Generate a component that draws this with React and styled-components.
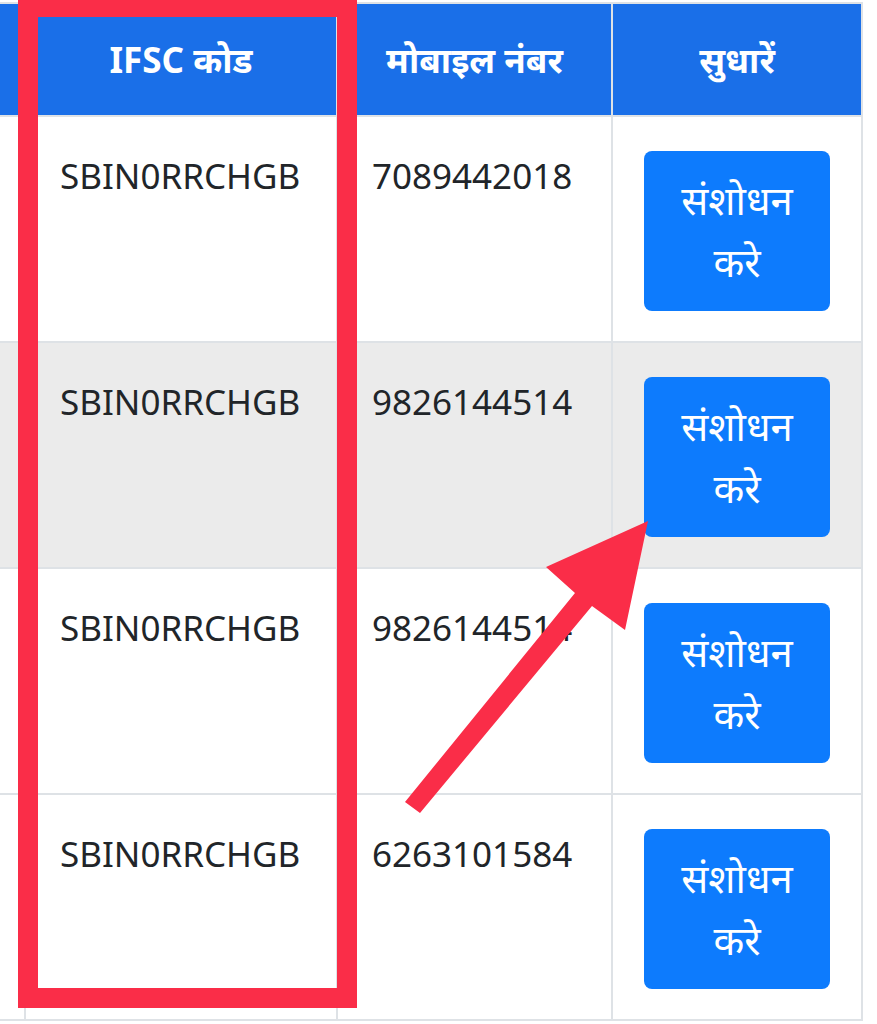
import styled, { createGlobalStyle } from "styled-components";

const GlobalStyle = createGlobalStyle`
  body {
    margin: 0;
    background: #fff;
    font-family: "Noto Sans", "Noto Sans Devanagari", "Open Sans", sans-serif;
    color: #212529;
  }
`;

const Page = styled.div`
  position: relative;
  width: 877px;
  height: 1024px;
  overflow: hidden;
  padding-top: 2px;
  box-sizing: border-box;
`;

const Table = styled.table`
  border-collapse: collapse;
  table-layout: fixed;
  width: 868px;
  margin-left: -7px;

  th,
  td {
    border: 2px solid #dee2e6;
  }
`;

const Head = styled.th`
  width: ${(props) => props.w}px;
  height: 111px;
  padding: 0;
  background-color: #1a6fe8;
  color: #fff;
  font-size: 35px;
  font-weight: 700;
  line-height: 1.4;
  text-align: center;
  vertical-align: middle;
`;

const Row = styled.tr`
  background-color: ${(props) => (props.shade ? "#ebebeb" : "#fff")};
`;

const Cell = styled.td`
  padding: 34px 31px 30px ${(props) => (props.action ? 31 : 34)}px;
  font-size: 35px;
  line-height: 1.4;
  vertical-align: top;
  white-space: nowrap;
`;

const EditButton = styled.button`
  display: block;
  width: 100%;
  height: 160px;
  padding: 18px 28px;
  border: 0;
  border-radius: 8px;
  background-color: #0d7bfd;
  color: #fff;
  font-family: inherit;
  font-size: 40px;
  line-height: 62px;
  white-space: normal;
  text-align: center;
`;

const Overlay = styled.svg`
  position: absolute;
  left: 0;
  top: 0;
  pointer-events: none;
`;

const rows = [
  { ifsc: "SBIN0RRCHGB", mobile: "7089442018" },
  { ifsc: "SBIN0RRCHGB", mobile: "9826144514" },
  { ifsc: "SBIN0RRCHGB", mobile: "9826144514" },
  { ifsc: "SBIN0RRCHGB", mobile: "6263101584" },
];

export default function App() {
  return (
    <Page>
      <GlobalStyle />
      <Table>
        <thead>
          <tr>
            <Head w={29}></Head>
            <Head w={310}>IFSC कोड</Head>
            <Head w={273}>मोबाइल नंबर</Head>
            <Head w={248}>सुधारें</Head>
          </tr>
        </thead>
        <tbody>
          {rows.map((row, i) => (
            <Row key={i} shade={i === 1}>
              <Cell></Cell>
              <Cell>{row.ifsc}</Cell>
              <Cell>{row.mobile}</Cell>
              <Cell action>
                <EditButton>संशोधन करे</EditButton>
              </Cell>
            </Row>
          ))}
        </tbody>
      </Table>
      <Overlay width="877" height="1024" viewBox="0 0 877 1024">
        <rect x="28" y="7" width="319" height="991" fill="none" stroke="#fa2d48" strokeWidth="20" />
        <polygon
          points="405,802 575,593 546,567 648,521 625,630 592,606 420,813"
          fill="#fa2d48"
        />
      </Overlay>
    </Page>
  );
}
